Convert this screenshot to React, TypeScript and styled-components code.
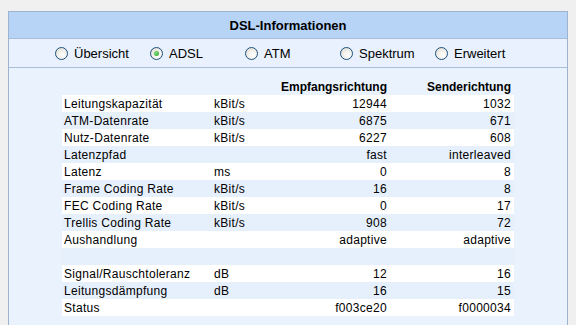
import React from 'react';
import styled, { createGlobalStyle } from 'styled-components';

const GlobalStyle = createGlobalStyle`
  html, body {
    margin: 0;
    padding: 0;
    background: #f0f0f0;
    font-family: "Liberation Sans", Arial, sans-serif;
  }
`;

const Page = styled.div`
  padding: 11px 8px 0 8px;
  height: 325px;
  box-sizing: border-box;
  overflow: hidden;
`;

const Panel = styled.div`
  border: 1px solid #9db3cf;
  border-bottom: none;
  background: #eaf2fd;
  height: 314px;
  box-sizing: border-box;
`;

const Header = styled.div`
  height: 26px;
  background: #b7d4f7;
  border-bottom: 1px solid #a8bed9;
  display: flex;
  align-items: center;
  justify-content: center;
  font-size: 13px;
  font-weight: bold;
  color: #000;
`;

const RadioBar = styled.div`
  height: 28px;
  background: #e8f1fd;
  border-bottom: 1px solid #a8bed9;
  display: flex;
  align-items: center;
  padding-left: 46px;
`;

const RadioItem = styled.label`
  width: 95px;
  display: flex;
  align-items: center;
  gap: 4px;
  font-size: 13px;
  color: #000;
`;

const Circle = styled.span<{ $checked?: boolean }>`
  width: 11px;
  height: 11px;
  border-radius: 50%;
  border: 1px solid #1c5180;
  background: radial-gradient(circle at 60% 65%, #ffffff 0%, #f2f0ea 45%, #d6d3c8 100%);
  display: flex;
  align-items: center;
  justify-content: center;
  margin-right: 2px;

  &::after {
    content: '';
    width: 5px;
    height: 5px;
    border-radius: 50%;
    background: ${(p) => (p.$checked ? 'radial-gradient(circle at 40% 40%, #7be37b, #2a9a2a)' : 'transparent')};
  }
`;

const Content = styled.div`
  padding: 10px 0 0 53px;
`;

const Table = styled.div`
  width: 452px;
  font-size: 12px;
  color: #000;
`;

const Row = styled.div<{ $shade?: boolean }>`
  display: grid;
  grid-template-columns: 150px 50px 123px 124px;
  height: 17px;
  align-items: center;
  background: ${(p) => (p.$shade ? '#e6effc' : '#ffffff')};
  padding: 0 3px 0 2px;
  white-space: nowrap;
`;

const HeadRow = styled(Row)`
  background: transparent;
  font-weight: bold;

  & > span {
    letter-spacing: 0;
  }
`;

const Cell = styled.span<{ $right?: boolean }>`
  text-align: ${(p) => (p.$right ? 'right' : 'left')};
  letter-spacing: 0.3px;
`;

type Line = [string, string, string, string];

const rows: Line[] = [
  ['Leitungskapazität', 'kBit/s', '12944', '1032'],
  ['ATM-Datenrate', 'kBit/s', '6875', '671'],
  ['Nutz-Datenrate', 'kBit/s', '6227', '608'],
  ['Latenzpfad', '', 'fast', 'interleaved'],
  ['Latenz', 'ms', '0', '8'],
  ['Frame Coding Rate', 'kBit/s', '16', '8'],
  ['FEC Coding Rate', 'kBit/s', '0', '17'],
  ['Trellis Coding Rate', 'kBit/s', '908', '72'],
  ['Aushandlung', '', 'adaptive', 'adaptive'],
  ['', '', '', ''],
  ['Signal/Rauschtoleranz', 'dB', '12', '16'],
  ['Leitungsdämpfung', 'dB', '16', '15'],
  ['Status', '', 'f003ce20', 'f0000034'],
];

const tabs = ['Übersicht', 'ADSL', 'ATM', 'Spektrum', 'Erweitert'];

export default function App() {
  return (
    <>
      <GlobalStyle />
      <Page>
        <Panel>
          <Header>DSL-Informationen</Header>
          <RadioBar>
            {tabs.map((t) => (
              <RadioItem key={t}>
                <Circle $checked={t === 'ADSL'} />
                {t}
              </RadioItem>
            ))}
          </RadioBar>
          <Content>
            <Table>
              <HeadRow>
                <Cell />
                <Cell />
                <Cell $right>Empfangsrichtung</Cell>
                <Cell $right>Senderichtung</Cell>
              </HeadRow>
              {rows.map((r, i) => (
                <Row key={i} $shade={i % 2 === 1}>
                  <Cell>{r[0]}</Cell>
                  <Cell>{r[1]}</Cell>
                  <Cell $right>{r[2]}</Cell>
                  <Cell $right>{r[3]}</Cell>
                </Row>
              ))}
            </Table>
          </Content>
        </Panel>
      </Page>
    </>
  );
}
